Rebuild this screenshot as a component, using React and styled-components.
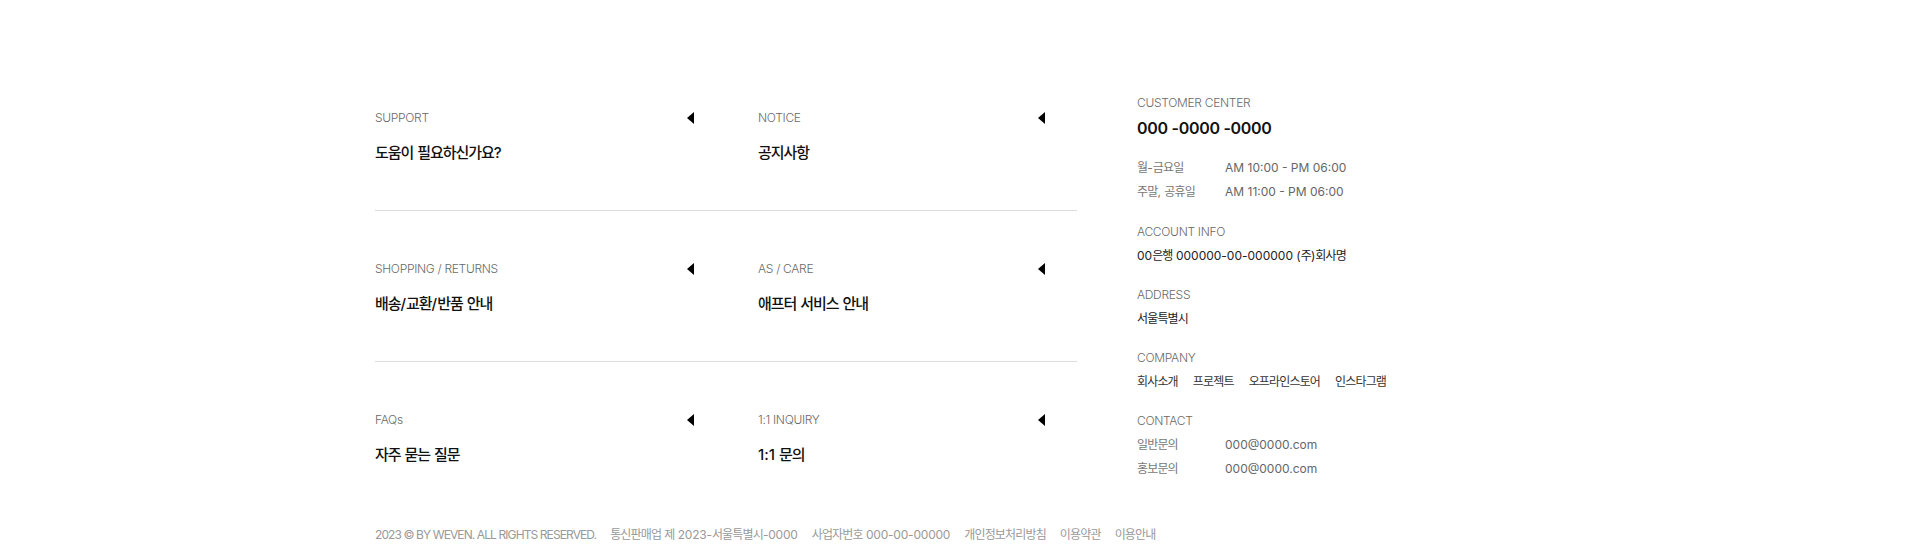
import React from 'react';
import styled, { createGlobalStyle } from 'styled-components';

const GlobalStyle = createGlobalStyle`
  html, body { margin: 0; padding: 0; background: #fff; }
  body {
    font-family: Inter, "Noto Sans CJK KR", sans-serif;
    color: #111;
    -webkit-font-smoothing: antialiased;
  }
  * { box-sizing: border-box; }
`;

const HANGUL = /([\u3130-\u318F\uAC00-\uD7A3]+)/;

const Ko = styled.span`
  letter-spacing: -0.07em;
`;

const ko = (text) =>
  text.split(HANGUL).map((part, i) => (i % 2 === 1 ? <Ko key={i}>{part}</Ko> : part));

const Page = styled.footer`
  width: 1170px;
  margin: 0 auto;
  padding: 60px 0 4px;
`;

const Main = styled.div`
  display: grid;
  grid-template-columns: 702px 1fr;
  column-gap: 60px;
  align-items: start;
`;

const LinkGrid = styled.div`
  display: grid;
  grid-template-columns: 1fr 1fr;
`;

const LinkCell = styled.a`
  display: block;
  text-decoration: none;
  color: inherit;
  padding: 48px 32px 46px ${(p) => (p.$right ? '32px' : '0')};
  border-bottom: ${(p) => (p.$last ? 'none' : '1px solid #dcdcdc')};
`;

const LabelRow = styled.div`
  display: flex;
  align-items: center;
  justify-content: space-between;
  height: 20px;
`;

const Label = styled.span`
  font-size: 12px;
  line-height: 20px;
  font-weight: 300;
  color: #6a6a6a;
  letter-spacing: -0.3px;
`;

const Title = styled.div`
  margin-top: 14px;
  font-size: 15px;
  line-height: 22px;
  font-weight: 500;
  color: #111;
`;

const Arrow = () => (
  <svg width="7" height="12" viewBox="0 0 7 12" aria-hidden="true">
    <polygon points="7,0 7,12 0,6" fill="#000" />
  </svg>
);

const Info = styled.div`
  display: flex;
  flex-direction: column;
  gap: 21px;
  padding-top: 34px;
`;

const InfoSection = styled.section`
  display: flex;
  flex-direction: column;
`;

const InfoLabel = styled.h3`
  margin: 0;
  font-size: 12px;
  line-height: 18px;
  font-weight: 300;
  color: #6a6a6a;
  letter-spacing: -0.3px;
`;

const Phone = styled.p`
  margin: 4px 0 0;
  font-size: 16px;
  line-height: 24px;
  font-weight: 600;
  color: #111;
  letter-spacing: -0.3px;
`;

const InfoRows = styled.dl`
  margin: ${(p) => p.$mt}px 0 ${(p) => p.$mb || 0}px;
  display: grid;
  grid-template-columns: ${(p) => p.$labelWidth}px auto;
  justify-content: start;
  row-gap: ${(p) => p.$rowGap}px;
`;

const RowLabel = styled.dt`
  font-size: 12px;
  line-height: ${(p) => p.$lh}px;
  color: #777;
`;

const RowValue = styled.dd`
  margin: 0;
  font-size: 12px;
  line-height: ${(p) => p.$lh}px;
  color: #666;
`;

const InfoValue = styled.p`
  margin: 6px 0 0;
  font-size: 12px;
  line-height: 18px;
  color: #222;
`;

const CompanyLinks = styled.nav`
  margin-top: 6px;
  display: flex;
  gap: 15px;
`;

const CompanyLink = styled.a`
  font-size: 12px;
  line-height: 18px;
  color: #333;
  text-decoration: none;
`;

const Legal = styled.div`
  display: flex;
  align-items: center;
  gap: 14px;
  margin-top: 14px;
  font-size: 12px;
  line-height: 18px;
  color: #999;
  letter-spacing: -0.2px;
`;

const Copyright = styled.span`
  letter-spacing: -0.9px;
`;

const LegalItem = styled.span``;

const links = [
  { label: 'SUPPORT', title: '도움이 필요하신가요?' },
  { label: 'NOTICE', title: '공지사항' },
  { label: 'SHOPPING / RETURNS', title: '배송/교환/반품 안내' },
  { label: 'AS / CARE', title: '애프터 서비스 안내' },
  { label: 'FAQs', title: '자주 묻는 질문' },
  { label: '1:1 INQUIRY', title: '1:1 문의' },
];

const hours = [
  ['월-금요일', 'AM 10:00 - PM 06:00'],
  ['주말, 공휴일', 'AM 11:00 - PM 06:00'],
];

const contacts = [
  ['일반문의', '000@0000.com'],
  ['홍보문의', '000@0000.com'],
];

export default function App() {
  return (
    <>
      <GlobalStyle />
      <Page>
        <Main>
          <LinkGrid>
            {links.map((l, i) => (
              <LinkCell key={l.label} href="#" $right={i % 2 === 1} $last={i >= 4}>
                <LabelRow>
                  <Label>{l.label}</Label>
                  <Arrow />
                </LabelRow>
                <Title>{ko(l.title)}</Title>
              </LinkCell>
            ))}
          </LinkGrid>

          <Info>
            <InfoSection>
              <InfoLabel>CUSTOMER CENTER</InfoLabel>
              <Phone>000 -0000 -0000</Phone>
              <InfoRows $mt={16} $mb={-2} $labelWidth={88} $rowGap={0}>
                {hours.map(([d, t]) => (
                  <React.Fragment key={d}>
                    <RowLabel $lh={24}>{ko(d)}</RowLabel>
                    <RowValue $lh={24}>{t}</RowValue>
                  </React.Fragment>
                ))}
              </InfoRows>
            </InfoSection>

            <InfoSection>
              <InfoLabel>ACCOUNT INFO</InfoLabel>
              <InfoValue>{ko('00은행 000000-00-000000 (주)회사명')}</InfoValue>
            </InfoSection>

            <InfoSection>
              <InfoLabel>ADDRESS</InfoLabel>
              <InfoValue>{ko('서울특별시')}</InfoValue>
            </InfoSection>

            <InfoSection>
              <InfoLabel>COMPANY</InfoLabel>
              <CompanyLinks>
                {['회사소개', '프로젝트', '오프라인스토어', '인스타그램'].map((c) => (
                  <CompanyLink key={c} href="#">{ko(c)}</CompanyLink>
                ))}
              </CompanyLinks>
            </InfoSection>

            <InfoSection>
              <InfoLabel>CONTACT</InfoLabel>
              <InfoRows $mt={6} $labelWidth={88} $rowGap={6}>
                {contacts.map(([k, v]) => (
                  <React.Fragment key={k}>
                    <RowLabel $lh={18}>{ko(k)}</RowLabel>
                    <RowValue $lh={18}>{v}</RowValue>
                  </React.Fragment>
                ))}
              </InfoRows>
            </InfoSection>
          </Info>
        </Main>

        <Legal>
          <Copyright>2023 © BY WEVEN. ALL RIGHTS RESERVED.</Copyright>
          <LegalItem>{ko('통신판매업 제 2023-서울특별시-0000')}</LegalItem>
          <LegalItem>{ko('사업자번호 000-00-00000')}</LegalItem>
          <LegalItem>{ko('개인정보처리방침')}</LegalItem>
          <LegalItem>{ko('이용약관')}</LegalItem>
          <LegalItem>{ko('이용안내')}</LegalItem>
        </Legal>
      </Page>
    </>
  );
}
